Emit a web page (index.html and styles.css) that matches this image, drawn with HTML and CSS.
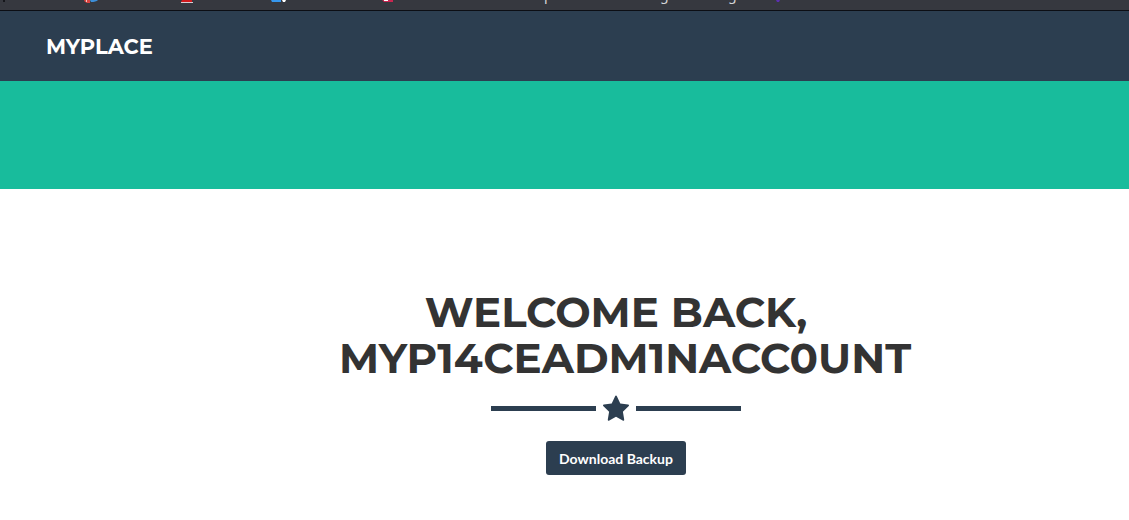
FILE: index.html
```html
<!DOCTYPE html>
<html lang="en">
<head>
<meta charset="utf-8">
<meta name="viewport" content="width=device-width, initial-scale=1">
<title>MyPlace</title>
<link rel="stylesheet" href="styles.css">
</head>
<body>
<div class="bookmarks">
  <svg class="bookmarks-icons" width="800" height="10" viewBox="0 0 800 10" aria-hidden="true">
    <path d="M3 0h2v2H3z" fill="#15161b"/>
    <path d="M84 0h6v3h-3q-3-1-3-3z" fill="#d94340"/>
    <path d="M86 0h1v2h-1z" fill="#f3c9c6"/>
    <path d="M90 0h8q-2 2-7 2z" fill="#3d8ed8"/>
    <path d="M182 0h10v2h-11z" fill="#d0191c"/>
    <path d="M181 2h12v1h-12z" fill="#d8cdd5"/>
    <path d="M271 0h10v2h-9z" fill="#3697ee"/>
    <path d="M282 0h4l-1 2h-2z" fill="#fff"/>
    <path d="M382 0h11v2h-9z" fill="#c92650"/>
    <path d="M384 0h4v1h-4z" fill="#fff"/>
    <path d="M776 0h4l-1 2h-2z" fill="#5b2fb0"/>
    <g class="bookmarks-label"><text x="544" y="0">p</text><text x="660" y="0">g</text><text x="728" y="0">g</text></g>
  </svg>
</div>
<nav class="navbar"><a class="brand" href="#">MYPLACE</a></nav>
<header class="banner"></header>
<main class="welcome">
  <h1 class="title">WELCOME BACK,<br>MYP14CEADM1NACC0UNT</h1>
  <div class="divider">
    <span class="rule"></span>
    <svg class="star" width="28" height="26" viewBox="0 0 28 26" aria-hidden="true"><path d="M14 0.5q.6 0 1 .9L18.3 8.500l7.800 1.100q.9.2.9.8 0 .4-.5.900L20.900 16.800l1.300 7.700q.1 1.200-.7 1.200-.4 0-.8-.3L14 21.800l-6.700 3.600q-.4.300-.8.300-.8 0-.7-1.200l1.300-7.700L1.500 11.300q-.5-.5-.5-.9 0-.6.9-.8L9.700 8.500 13 1.400q.4-.9 1-.9z" fill="#2c3e50"/></svg>
    <span class="rule"></span>
  </div>
  <button class="download" type="button">Download Backup</button>
</main>
</body>
</html>
```
FILE: styles.css
```css
body {
  margin: 0;
  background: #fff;
  font-family: Lato, sans-serif;
}

.bookmarks {
  height: 10px;
  overflow: hidden;
  background: #36383f;
  border-bottom: 1px solid #0c0e14;
}

.bookmarks-icons {
  display: block;
}

.bookmarks-label {
  fill: #d5d5d8;
  font: 14px "Noto Sans", sans-serif;
}

.navbar {
  display: flex;
  align-items: center;
  box-sizing: border-box;
  height: 70px;
  padding: 2px 46px 0;
  background: #2c3e50;
}

.brand {
  color: #fff;
  font: 700 21px/30px Montserrat, Inter, sans-serif;
  text-decoration: none;
}

.banner {
  height: 108px;
  background: #18bc9c;
}

.welcome {
  display: flex;
  flex-direction: column;
  align-items: center;
  padding: 100px 0 45px 103px;
}

/* The long account name runs past the right edge of the column. */
.title {
  width: 100%;
  max-width: 554px;
  margin: 0;
  color: #333;
  font: 700 42px/46px Montserrat, Inter, sans-serif;
  text-align: center;
  white-space: nowrap;
}

.divider {
  display: flex;
  align-items: center;
  gap: 6px;
  margin: 14px 0 20px;
}

.rule {
  width: 105px;
  height: 5px;
  background: #2c3e50;
}

.download {
  height: 34px;
  padding: 2px 13px 0;
  border: 0;
  border-radius: 3px;
  background: #2c3e50;
  color: #fff;
  font: 700 14px/20px Lato, sans-serif;
}
```
